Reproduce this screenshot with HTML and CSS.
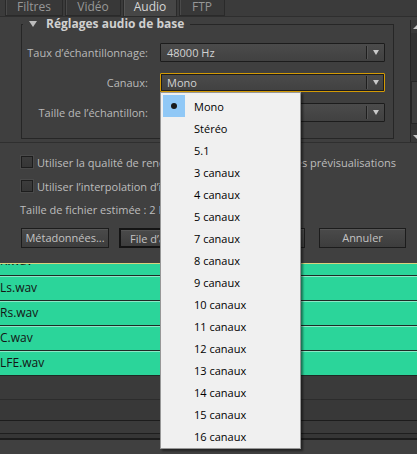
FILE: index.html
```html
<!DOCTYPE html>
<html lang="fr">
<head>
<meta charset="utf-8">
<title>Réglages audio</title>
<link rel="stylesheet" href="styles.css">
</head>
<body>
<div class="window">
  <div class="tabs">
    <div class="tab t-filtres">Filtres</div>
    <div class="tab t-video">Vidéo</div>
    <div class="tab t-audio active">Audio</div>
    <div class="tab t-ftp">FTP</div>
  </div>

  <div class="settings">
    <div class="pane">
      <fieldset class="group">
        <legend class="group-title"><span class="twisty"></span>Réglages audio de base</legend>
        <div class="form">
          <div class="lbl">Taux d’échantillonnage:</div>
          <div class="select"><span class="value">48000 Hz</span><span class="sep"></span><span class="arrow"></span></div>
          <div class="lbl">Canaux:</div>
          <div class="select focused"><span class="value">Mono</span><span class="sep"></span><span class="arrow"></span></div>
          <div class="lbl">Taille de l’échantillon:</div>
          <div class="select"><span class="value">16 bits</span><span class="sep"></span><span class="arrow"></span></div>
        </div>
      </fieldset>
    </div>
    <div class="scrollbar">
      <div class="sb-up"></div>
      <div class="sb-track"><div class="sb-thumb"></div></div>
      <div class="sb-down"></div>
    </div>
  </div>

  <div class="options">
    <div class="opt-row">
      <div class="check-item"><span class="checkbox"></span><span>Utiliser la qualité de rendu maximale</span></div>
      <div class="check-item second"><span class="checkbox"></span><span>Utiliser les prévisualisations</span></div>
    </div>
    <div class="opt-row">
      <div class="check-item"><span class="checkbox"></span><span>Utiliser l’interpolation d’images</span></div>
    </div>
    <div class="opt-row size">Taille de fichier estimée : 2 Mo</div>
    <div class="buttons">
      <div class="btn">Métadonnées...</div>
      <div class="btn default">File d’attente</div>
      <div class="btn">Exporter</div>
      <div class="btn cancel">Annuler</div>
    </div>
  </div>

  <div class="queue">
    <div class="queue-inner">
      <div class="qrow">R.wav</div>
      <div class="qrow">Ls.wav</div>
      <div class="qrow">Rs.wav</div>
      <div class="qrow">C.wav</div>
      <div class="qrow">LFE.wav</div>
    </div>
  </div>

  <div class="footer">
    <div class="band b1"></div>
    <div class="band b2"></div>
    <div class="band b3"></div>
    <div class="band b4"></div>
    <div class="band b5"></div>
  </div>

  <div class="menu">
    <div class="item checked"><span class="mark"><span class="dot"></span></span><span class="txt">Mono</span></div>
    <div class="item"><span class="mark"></span><span class="txt">Stéréo</span></div>
    <div class="item"><span class="mark"></span><span class="txt">5.1</span></div>
    <div class="item"><span class="mark"></span><span class="txt">3 canaux</span></div>
    <div class="item"><span class="mark"></span><span class="txt">4 canaux</span></div>
    <div class="item"><span class="mark"></span><span class="txt">5 canaux</span></div>
    <div class="item"><span class="mark"></span><span class="txt">7 canaux</span></div>
    <div class="item"><span class="mark"></span><span class="txt">8 canaux</span></div>
    <div class="item"><span class="mark"></span><span class="txt">9 canaux</span></div>
    <div class="item"><span class="mark"></span><span class="txt">10 canaux</span></div>
    <div class="item"><span class="mark"></span><span class="txt">11 canaux</span></div>
    <div class="item"><span class="mark"></span><span class="txt">12 canaux</span></div>
    <div class="item"><span class="mark"></span><span class="txt">13 canaux</span></div>
    <div class="item"><span class="mark"></span><span class="txt">14 canaux</span></div>
    <div class="item"><span class="mark"></span><span class="txt">15 canaux</span></div>
    <div class="item"><span class="mark"></span><span class="txt">16 canaux</span></div>
  </div>
</div>
</body>
</html>
```

FILE: styles.css
```css
* { box-sizing: border-box; }
html, body { margin: 0; padding: 0; background: #404040; }
body {
  font-family: "Open Sans", "Noto Sans", "Liberation Sans", sans-serif;
  font-size: 11px;
  color: #bcbcbc;
}
.window {
  width: 417px;
  height: 454px;
  overflow: hidden;
  position: relative;
  background: #404040;
}

/* tabs */
.tabs {
  height: 17px;
  display: flex;
  gap: 2px;
  padding-left: 5px;
  background: #3b3b3b;
  border-bottom: 1px solid #2e2e2e;
}
.tab {
  height: 16px;
  line-height: 13px;
  font-size: 12px;
  color: #979797;
  text-align: center;
  background: #383838;
  border: 1px solid #2a2a2a;
  border-top: none;
  box-shadow: inset 1px 0 0 #4a4a4a;
}
.t-filtres { width: 58px; }
.t-video { width: 56px; }
.t-audio { width: 54px; }
.t-ftp { width: 46px; }
.tab.active {
  height: 17px;
  background: #464646;
  color: #d6d6d6;
  box-shadow: inset 1px 0 0 #555;
}

/* settings area */
.settings {
  height: 126px;
  display: flex;
  border-bottom: 1px solid #2f2f2f;
  background: #3f3f3f;
}
.pane {
  flex: 1;
  padding-left: 21px;
}
.group {
  margin: 0;
  width: 373px;
  height: 122px;
  padding: 12px 0 0 0;
  border: 1px solid #262626;
  min-width: 0;
}
.group-title {
  padding: 0 6px 0 6px;
  margin-left: 1px;
  font-weight: bold;
  font-size: 12px;
  line-height: 14px;
  color: #d0d0d0;
  display: flex;
  align-items: center;
}
.twisty {
  width: 0;
  height: 0;
  border-left: 4px solid transparent;
  border-right: 4px solid transparent;
  border-top: 6px solid #bdbdbd;
  margin-right: 9px;
}
.form {
  display: grid;
  grid-template-columns: 126px 225px;
  column-gap: 12px;
  row-gap: 11px;
  align-items: center;
}
.lbl {
  text-align: right;
  font-size: 11px;
  color: #b9b9b9;
  white-space: nowrap;
}
.select {
  height: 19px;
  display: flex;
  align-items: center;
  background: linear-gradient(#4b4b4b, #414141);
  border: 1px solid #1c1c1c;
  border-radius: 1px;
}
.select.focused {
  border: 1px solid #d39a05;
  box-shadow: inset 0 0 0 1px #1c1c1c;
}
.value {
  flex: 1;
  padding-left: 6px;
  color: #d2d2d2;
  font-size: 11px;
}
.sep {
  width: 1px;
  height: 13px;
  background: #1e1e1e;
  box-shadow: 1px 0 0 #555;
  margin-right: 6px;
}
.arrow {
  width: 0;
  height: 0;
  border-left: 3.5px solid transparent;
  border-right: 3.5px solid transparent;
  border-top: 5px solid #c9c9c9;
  margin-right: 5px;
}

/* scrollbar */
.scrollbar {
  width: 7px;
  margin-top: 3px;
  background: #343434;
  border-left: 1px solid #262626;
  display: flex;
  flex-direction: column;
}
.sb-up, .sb-down {
  height: 14px;
  position: relative;
  background: #3a3a3a;
}
.sb-up::after, .sb-down::after {
  content: "";
  position: absolute;
  left: 2px;
  border-left: 4px solid transparent;
  border-right: 4px solid transparent;
}
.sb-up::after { top: 5px; border-bottom: 4px solid #c8c8c8; }
.sb-down::after { top: 5px; border-top: 4px solid #c8c8c8; }
.sb-track {
  flex: 1;
  padding-top: 48px;
  padding-bottom: 6px;
  background: #333;
}
.sb-thumb {
  height: 43px;
  background: #3f3f3f;
  border: 1px solid #262626;
  border-right: none;
}

/* options */
.options {
  padding: 7px 0 0 21px;
  height: 120px;
}
.opt-row {
  height: 24px;
  display: flex;
  align-items: center;
  padding-right: 21px;
  font-size: 11px;
  color: #bdbdbd;
  white-space: nowrap;
}
.opt-row.size { height: 22px; margin-left: -1px; }
.check-item { display: flex; align-items: center; }
.check-item.second { margin-left: auto; }
.checkbox {
  width: 12px;
  height: 12px;
  border: 1px solid #1d1d1d;
  background: linear-gradient(#3c3c3c, #363636);
  box-shadow: 0 0 0 1px #4a4a4a;
  margin-right: 4px;
}
.buttons {
  margin-top: 8px;
  display: flex;
  gap: 10px;
}
.btn {
  width: 88px;
  height: 20px;
  line-height: 17px;
  text-align: center;
  font-size: 11px;
  color: #c3c3c3;
  background: linear-gradient(#4a4a4a, #3d3d3d);
  border: 1px solid #1c1c1c;
  box-shadow: inset 0 1px 0 #555;
  white-space: nowrap;
}
.btn.default { border: 2px solid #141414; }
.btn.cancel { width: 87px; margin-left: 4px; }

/* queue */
.queue {
  height: 113px;
  overflow: hidden;
  border-top: 1px solid #d9d27e;
}
.queue-inner { margin-top: -14px; }
.qrow {
  height: 25px;
  line-height: 24px;
  font-size: 12px;
  color: #141414;
  background: #2bd59a;
  border-bottom: 1px solid #1e2a25;
  box-shadow: inset 0 1px 0 #8ae8c6;
}
.qrow:first-child { height: 26px; line-height: 22px; }

/* footer bands */
.footer {
  height: 80px;
  display: flex;
  flex-direction: column;
}
.band { background: #3a3a3a; }
.b1 { height: 24px; border-bottom: 1px solid #2c2c2c; }
.b2 { height: 21px; background: #383838; border-bottom: 1px solid #1c1c1c; }
.b3 { height: 13px; background: #3a3a3a; border-bottom: 1px solid #1e1e1e; }
.b4 { height: 6px; background: #363636; border-bottom: 2px solid #1c1c1c; }
.b5 { flex: 1; background: #404040; }

/* popup menu */
.menu {
  position: absolute;
  left: 160px;
  top: 92px;
  width: 141px;
  height: 357px;
  padding: 2px 1px;
  background: #f0f0f0;
  border: 1px solid #979797;
  box-shadow: 2px 2px 2px rgba(0, 0, 0, 0.45);
  font-size: 11px;
  color: #000;
}
.item {
  height: 22px;
  display: flex;
  align-items: center;
}
.mark {
  width: 22px;
  height: 22px;
  margin-left: 1px;
  display: flex;
  align-items: center;
  justify-content: center;
}
.checked .mark { background: #90c8f6; }
.dot {
  width: 6px;
  height: 6px;
  border-radius: 50%;
  background: #1a1a1a;
}
.txt { margin-left: 9px; white-space: nowrap; }
```
